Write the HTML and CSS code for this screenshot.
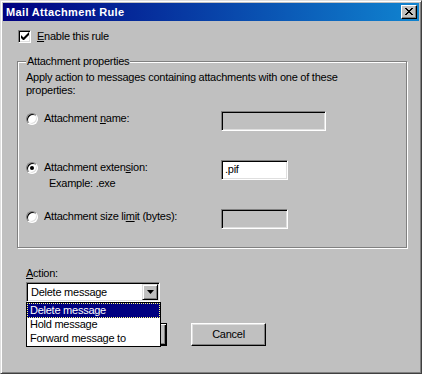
FILE: index.html
```html
<!DOCTYPE html>
<html lang="en">
<head>
  <meta charset="UTF-8">
  <title>Mail Attachment Rule</title>
  <link rel="stylesheet" href="styles.css">
</head>
<body>
  <div class="window">
    <div class="titlebar">
      <span class="title">Mail Attachment Rule</span>
      <span class="close-btn">
        <svg width="8" height="7" viewBox="0 0 8 7"><path d="M0 0h2v1h1v1h2V1h1V0h2v1H7v1H6v1H5v1h1v1h1v1h1v1H6V6H5V5H3v1H2v1H0V6h1V5h1V4h1V3H2V2H1V1H0z" fill="#000"/></svg>
      </span>
    </div>

    <div class="content">
      <label class="check-row">
        <span class="checkbox">
          <svg width="9" height="9" viewBox="0 0 9 9"><path d="M1 3v3l2 2h1l5-5V0L3.5 5.5z" fill="#000"/></svg>
        </span>
        <span><u>E</u>nable this rule</span>
      </label>

      <fieldset class="group">
        <legend>Attachment properties</legend>
        <p class="intro">Apply action to messages containing attachments with one of these<br>properties:</p>

        <div class="option first">
          <div class="option-label">
            <div class="radio-line"><span class="radio"></span><span>Attachment <u>n</u>ame:</span></div>
          </div>
          <span class="textbox wide"></span>
        </div>

        <div class="option second">
          <div class="option-label">
            <div class="radio-line"><span class="radio checked"></span><span>Attachment exten<u>s</u>ion:</span></div>
            <div class="example">Example: .exe</div>
          </div>
          <span class="textbox filled">.pif</span>
        </div>

        <div class="option third">
          <div class="option-label">
            <div class="radio-line"><span class="radio"></span><span>Attachment size li<u>m</u>it (bytes):</span></div>
          </div>
          <span class="textbox"></span>
        </div>
      </fieldset>

      <div class="action">
        <div class="action-label"><u>A</u>ction:</div>
        <div class="combo">
          <span class="combo-value">Delete message</span>
          <span class="combo-btn">
            <svg width="7" height="4" viewBox="0 0 7 4"><path d="M0 0h7L3.5 4z" fill="#000"/></svg>
          </span>
          <ul class="dropdown">
            <li class="selected">Delete message</li>
            <li>Hold message</li>
            <li>Forward message to</li>
          </ul>
        </div>
      </div>

      <div class="buttons">
        <button class="btn default">OK</button>
        <button class="btn">Cancel</button>
      </div>
    </div>
  </div>
</body>
</html>
```

FILE: styles.css
```css
body {
  margin: 0;
  background-color: #c0c0c0;
  font-family: "Liberation Sans", Arial, sans-serif;
  font-size: 11px;
  line-height: 13px;
  letter-spacing: -0.25px;
  color: #000;
}

.window {
  width: 422px;
  height: 374px;
  box-sizing: border-box;
  background-color: #c0c0c0;
  border: 1px solid;
  border-color: #dfdfdf #404040 #404040 #dfdfdf;
  box-shadow: inset 1px 1px 0 #fff, inset -1px -1px 0 #808080;
  padding: 2px;
  display: flex;
  flex-direction: column;
}

.titlebar {
  height: 18px;
  background: linear-gradient(to right, #000080, #1084d0);
  display: flex;
  align-items: center;
  justify-content: space-between;
  padding: 0 2px 0 3px;
}

.title {
  color: #fff;
  font-weight: bold;
  letter-spacing: 0.35px;
}

.close-btn {
  width: 16px;
  height: 14px;
  box-sizing: border-box;
  background-color: #c0c0c0;
  border: 1px solid;
  border-color: #fff #000 #000 #fff;
  box-shadow: inset -1px -1px 0 #808080;
  display: flex;
  align-items: center;
  justify-content: center;
  padding: 0 1px 1px 0;
}

.content {
  padding: 9px 0 0 14px;
}

.check-row {
  display: flex;
  align-items: center;
  gap: 6px;
  margin-left: 1px;
  height: 13px;
}

.checkbox {
  width: 13px;
  height: 13px;
  box-sizing: border-box;
  background-color: #fff;
  border: 1px solid;
  border-color: #808080 #fff #fff #808080;
  box-shadow: inset 1px 1px 0 #000, inset -1px -1px 0 #dfdfdf;
  display: flex;
  align-items: center;
  justify-content: center;
}

.group {
  margin: 12px 0 0 0;
  width: 390px;
  box-sizing: border-box;
  border: 1px solid #808080;
  box-shadow: inset 1px 1px 0 #fff, 1px 1px 0 #fff;
  padding: 0 0 18px 8px;
}

.group legend {
  padding: 0 1px;
  margin-left: 0;
  background-color: #c0c0c0;
  line-height: 13px;
}

.intro {
  margin: 3px 0 0 0;
  white-space: nowrap;
}

.option {
  display: flex;
  align-items: flex-start;
}

.option.first { margin-top: 14px; }
.option.second { margin-top: 29px; }
.option.third { margin-top: 19px; }

.option-label {
  flex: 0 0 195px;
  padding-top: 1px;
}

.radio-line {
  display: flex;
  align-items: center;
  gap: 6px;
}

.radio {
  width: 12px;
  height: 12px;
  box-sizing: border-box;
  border-radius: 50%;
  background-color: #fff;
  border: 1px solid;
  border-color: #808080 #fff #fff #808080;
  box-shadow: inset 1px 1px 0 #000, inset -1px -1px 0 #dfdfdf;
  display: flex;
  align-items: center;
  justify-content: center;
}

.radio.checked::after {
  content: "";
  width: 4px;
  height: 4px;
  border-radius: 50%;
  background-color: #000;
}

.example {
  margin: 3px 0 0 23px;
}

.textbox {
  width: 67px;
  height: 20px;
  box-sizing: border-box;
  border: 1px solid;
  border-color: #808080 #fff #fff #808080;
  box-shadow: inset 1px 1px 0 #000, inset -1px -1px 0 #dfdfdf;
  padding: 2px 3px 0 3px;
  background-color: #c0c0c0;
}

.textbox.wide { width: 105px; }
.textbox.filled { background-color: #fff; }

.action {
  margin: 19px 0 0 9px;
}

.action-label {
  height: 13px;
}

.combo {
  position: relative;
  margin-top: 2px;
  width: 134px;
  height: 20px;
  box-sizing: border-box;
  background-color: #fff;
  border: 1px solid;
  border-color: #808080 #fff #fff #808080;
  box-shadow: inset 1px 1px 0 #000, inset -1px -1px 0 #dfdfdf;
  padding: 2px 2px 2px 4px;
  display: flex;
  align-items: center;
  justify-content: space-between;
}

.combo-btn {
  width: 16px;
  height: 16px;
  margin-right: -1px;
  box-sizing: border-box;
  background-color: #c0c0c0;
  border: 1px solid;
  border-color: #dfdfdf #000 #000 #dfdfdf;
  box-shadow: inset 1px 1px 0 #fff, inset -1px -1px 0 #808080;
  display: flex;
  align-items: center;
  justify-content: center;
}

.dropdown {
  position: absolute;
  top: 19px;
  left: -1px;
  width: 135px;
  margin: 0;
  padding: 0;
  list-style: none;
  box-sizing: border-box;
  background-color: #fff;
  border: 1px solid #000;
  z-index: 2;
}

.dropdown li {
  height: 13px;
  padding-left: 2px;
  border: 1px solid transparent;
  margin: -1px 0;
}

.dropdown li:first-child { margin-top: 0; }
.dropdown li:last-child { margin-bottom: 0; }

.dropdown li.selected {
  background-color: #000080;
  color: #fff;
  border: 1px dotted #ffff80;
}

.buttons {
  display: flex;
  gap: 24px;
  margin: 21px 0 0 75px;
}

.btn {
  width: 75px;
  height: 23px;
  box-sizing: border-box;
  font: inherit;
  letter-spacing: inherit;
  background-color: #c0c0c0;
  border: 1px solid;
  border-color: #fff #000 #000 #fff;
  box-shadow: inset -1px -1px 0 #808080, inset 1px 1px 0 #dfdfdf;
  padding: 0;
  color: #000;
}

.btn.default {
  border: 1px solid #000;
  box-shadow: inset 1px 1px 0 #fff, inset -1px -1px 0 #000, inset -2px -2px 0 #808080;
}
```
